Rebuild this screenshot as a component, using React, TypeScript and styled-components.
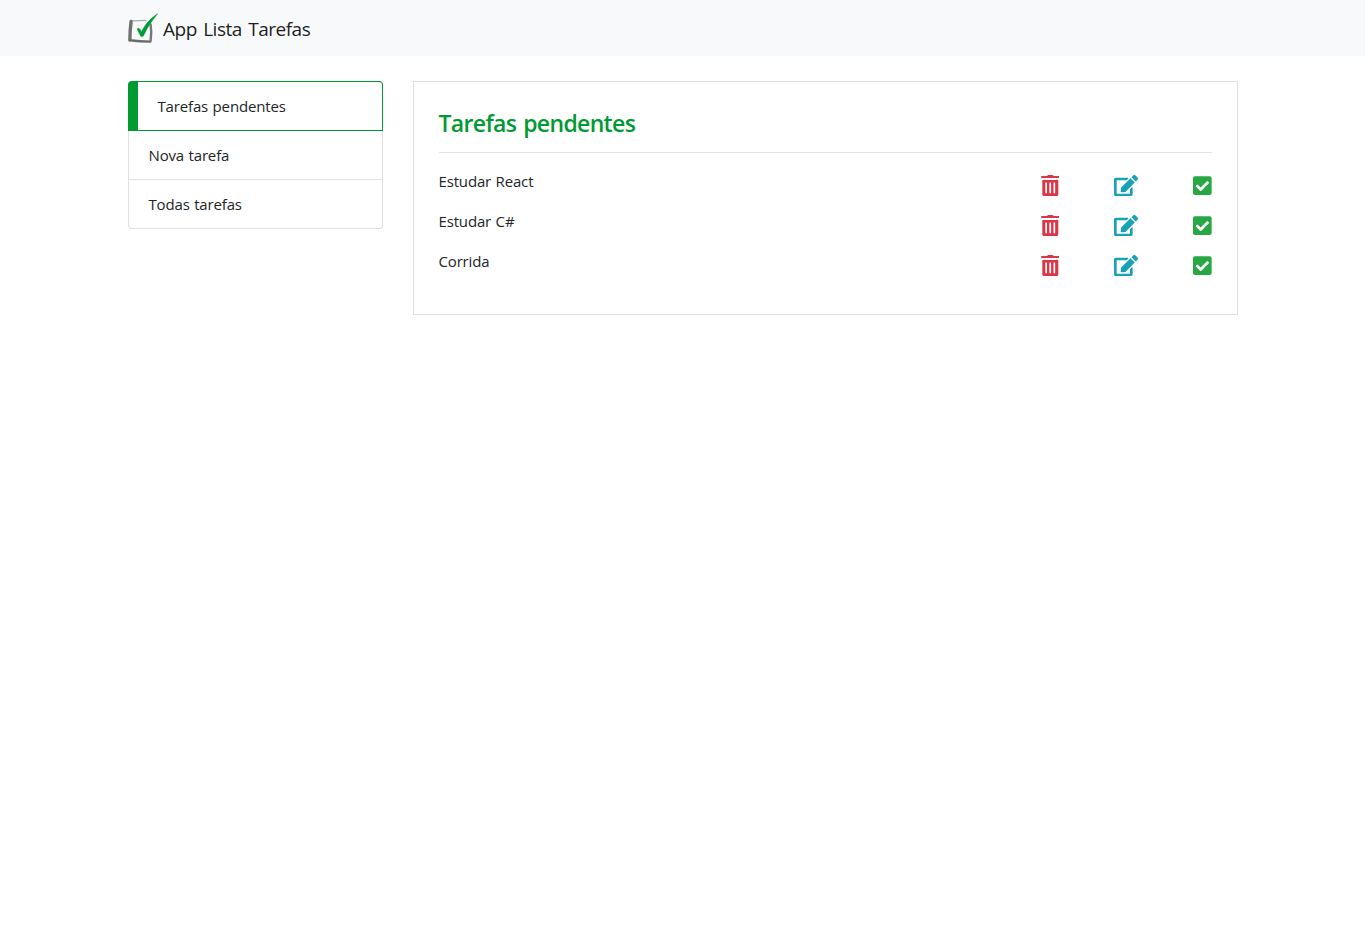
import React from 'react';
import styled, { createGlobalStyle, css } from 'styled-components';
import { FaEdit, FaCheckSquare } from 'react-icons/fa';

const GlobalStyle = createGlobalStyle`
  *, *::before, *::after { box-sizing: border-box; }
  body {
    margin: 0;
    background: #fff;
    color: #212529;
    font: 400 15px/24px 'Open Sans', 'Noto Sans', sans-serif;
    letter-spacing: -0.16px;
    word-spacing: 0.8px;
  }
`;

const Container = styled.div`
  width: 100%;
  max-width: 1140px;
  margin: 0 auto;
  padding: 0 15px;
`;

const Navbar = styled.nav`
  background: #f8f9fa;
  padding: 8px 0;
`;

const Brand = styled.a`
  display: flex;
  align-items: center;
  gap: 5.5px;
  padding: 5px 0;
  height: 40px;
  font-size: 19px;
  line-height: 30px;
  letter-spacing: -0.5px;
  word-spacing: 2px;
  color: rgba(0, 0, 0, 0.9);
`;

const BrandName = styled.span`
  padding-top: 2px;
`;

const Main = styled(Container)`
  display: flex;
  align-items: flex-start;
  gap: 30px;
  margin-top: 25px;
`;

const Menu = styled.ul`
  flex: 0 0 255px;
  margin: 0;
  padding: 0;
  list-style: none;
`;

const MenuItem = styled.li<{ $active?: boolean }>`
  padding: 12px 20px;
  border: 1px solid #dfdfdf;
  border-top-width: 0;
  &:first-child { border-top-width: 1px; border-radius: 4px 4px 0 0; }
  &:last-child { border-radius: 0 0 4px 4px; }
  ${({ $active }) => $active && css`
    border-color: #009a33;
    border-left-width: 10px;
  `}
`;

const Panel = styled.section`
  flex: 1;
  padding: 25px;
  border: 1px solid #dfdfdf;
`;

const Title = styled.h4`
  margin: 0;
  padding-top: 2px;
  font-size: 23px;
  font-weight: 600;
  line-height: 28px;
  height: 28.8px;
  letter-spacing: -0.65px;
  word-spacing: 1.5px;
  color: #009a33;
`;

const Divider = styled.hr`
  margin: 16px 0;
  border: 0;
  border-top: 1px solid rgba(0, 0, 0, 0.1);
`;

const Task = styled.div`
  display: flex;
  justify-content: space-between;
  height: 24px;
  margin-bottom: 16px;
`;

const Actions = styled.div`
  display: flex;
  justify-content: space-between;
  width: 171px;
  padding-top: 6px;
`;

const Action = styled.span<{ $color: string; $width: number }>`
  display: flex;
  width: ${({ $width }) => $width}px;
  color: ${({ $color }) => $color};
  svg { width: 100%; height: 21.333px; }
`;

const Logo = () => (
  <svg width="30" height="30" viewBox="0 0 30 30" fill="none">
    <path d="M4 7.8 L18 7.4" stroke="#aaa" strokeWidth="1.2" />
    <path d="M3.1 8.4 Q1.9 17 1.9 26.8" stroke="#707070" strokeWidth="3.4" strokeLinecap="round" />
    <path d="M1.6 27.3 Q12 28.5 22 28.6" stroke="#6b6b6b" strokeWidth="2.4" strokeLinecap="round" />
    <path d="M22.6 11.5 Q23.9 19 22.6 28.2" stroke="#777" strokeWidth="2.4" strokeLinecap="round" />
    <path d="M9 16 C10.8 14 12.4 16.6 13.5 18.8 C18 10.2 23 4.8 29.8 0.6 C24.5 7.2 19.5 14.2 16.2 21.5 C14.9 24.4 12.8 24.4 11.8 21.5 Z" fill="#009a33" stroke="#009a33" strokeWidth="0.4" />
  </svg>
);

const Trash = () => (
  <svg viewBox="0 0 18.67 21.333" fill="currentColor">
    <path
      fillRule="evenodd"
      d="M0.6 1H6.1L6.7 0.2Q7 -0.2 7.5 -0.2H11.2Q11.7 -0.2 12 0.2L12.6 1H18.1Q18.6 1 18.6 1.5V3H0.2V1.5Q0.2 1 0.6 1ZM1.3 5H17.3V19.3Q17.3 21.1 15.5 21.1H3.1Q1.3 21.1 1.3 19.3ZM4.3 7.5V18.2H6V7.5ZM8.4 7.5V18.2H10.1V7.5ZM12.5 7.5V18.2H14.2V7.5Z"
    />
  </svg>
);

const menu = ['Tarefas pendentes', 'Nova tarefa', 'Todas tarefas'];
const tasks = ['Estudar React', 'Estudar C#', 'Corrida'];

export default function App() {
  return (
    <>
      <GlobalStyle />
      <Navbar>
        <Container>
          <Brand><Logo /><BrandName>App Lista Tarefas</BrandName></Brand>
        </Container>
      </Navbar>
      <Main>
        <Menu>
          {menu.map((label, i) => <MenuItem key={label} $active={i === 0}>{label}</MenuItem>)}
        </Menu>
        <Panel>
          <Title>Tarefas pendentes</Title>
          <Divider />
          {tasks.map((task) => (
            <Task key={task}>
              <span>{task}</span>
              <Actions>
                <Action $color="#dc3545" $width={18.67}><Trash /></Action>
                <Action $color="#17a2b8" $width={24}><FaEdit /></Action>
                <Action $color="#28a745" $width={18.67}><FaCheckSquare /></Action>
              </Actions>
            </Task>
          ))}
        </Panel>
      </Main>
    </>
  );
}
